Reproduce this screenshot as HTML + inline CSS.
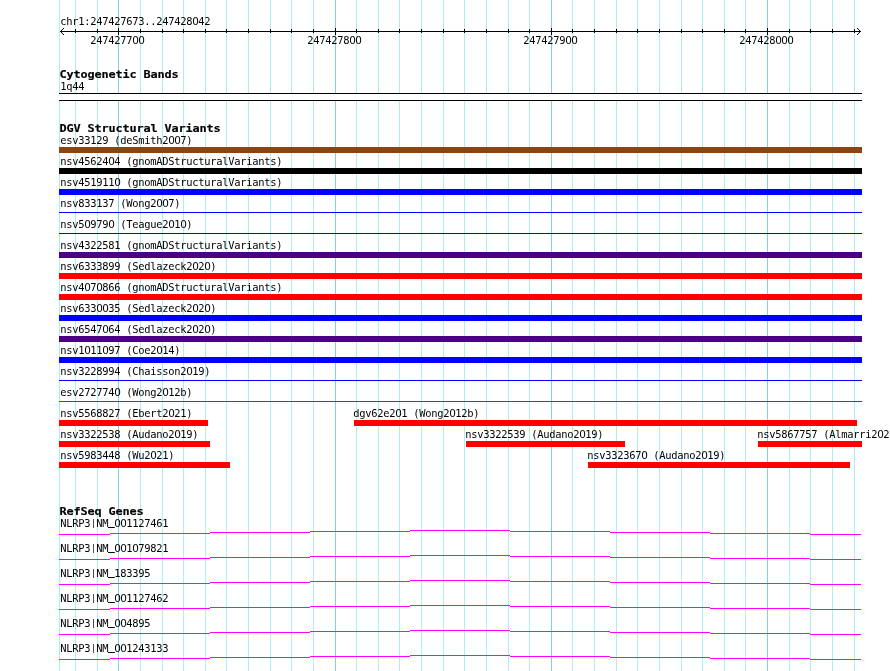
<!DOCTYPE html>
<html lang="en"><head><meta charset="utf-8"><title>chr1:247427673..247428042</title>
<style>
html,body{margin:0;padding:0;background:#fff;}
svg{display:block;will-change:transform;}
.s{font-family:"DejaVu Sans Mono","Liberation Mono",monospace;font-size:11px;fill:#000;}
.b{font-family:"DejaVu Sans Mono","Liberation Mono",monospace;font-weight:bold;font-size:11px;fill:#000;stroke:#000;stroke-width:0.15px;}
.z{font-family:"DejaVu Sans","Liberation Sans",sans-serif;}
.u{stroke:#000;stroke-width:0.55px;}
.p{font-size:9px;}
rect,line{shape-rendering:crispEdges;}
</style></head><body>
<svg width="890" height="671" viewBox="0 0 890 671">
<rect x="0" y="0" width="890" height="671" fill="#ffffff"/>
<g id="grid">
<rect x="59" y="0" width="1" height="671" fill="#AFEEEE"/>
<rect x="75" y="0" width="1" height="671" fill="#AFEEEE"/>
<rect x="97" y="0" width="1" height="671" fill="#AFEEEE"/>
<rect x="118" y="0" width="1" height="671" fill="#87CEEB"/>
<rect x="140" y="0" width="1" height="671" fill="#AFEEEE"/>
<rect x="162" y="0" width="1" height="671" fill="#AFEEEE"/>
<rect x="183" y="0" width="1" height="671" fill="#AFEEEE"/>
<rect x="205" y="0" width="1" height="671" fill="#AFEEEE"/>
<rect x="226" y="0" width="1" height="671" fill="#AFEEEE"/>
<rect x="248" y="0" width="1" height="671" fill="#AFEEEE"/>
<rect x="270" y="0" width="1" height="671" fill="#AFEEEE"/>
<rect x="291" y="0" width="1" height="671" fill="#AFEEEE"/>
<rect x="313" y="0" width="1" height="671" fill="#AFEEEE"/>
<rect x="335" y="0" width="1" height="671" fill="#87CEEB"/>
<rect x="356" y="0" width="1" height="671" fill="#AFEEEE"/>
<rect x="378" y="0" width="1" height="671" fill="#AFEEEE"/>
<rect x="399" y="0" width="1" height="671" fill="#AFEEEE"/>
<rect x="421" y="0" width="1" height="671" fill="#AFEEEE"/>
<rect x="443" y="0" width="1" height="671" fill="#AFEEEE"/>
<rect x="464" y="0" width="1" height="671" fill="#AFEEEE"/>
<rect x="486" y="0" width="1" height="671" fill="#AFEEEE"/>
<rect x="508" y="0" width="1" height="671" fill="#AFEEEE"/>
<rect x="529" y="0" width="1" height="671" fill="#AFEEEE"/>
<rect x="551" y="0" width="1" height="671" fill="#87CEEB"/>
<rect x="572" y="0" width="1" height="671" fill="#AFEEEE"/>
<rect x="594" y="0" width="1" height="671" fill="#AFEEEE"/>
<rect x="616" y="0" width="1" height="671" fill="#AFEEEE"/>
<rect x="637" y="0" width="1" height="671" fill="#AFEEEE"/>
<rect x="659" y="0" width="1" height="671" fill="#AFEEEE"/>
<rect x="681" y="0" width="1" height="671" fill="#AFEEEE"/>
<rect x="702" y="0" width="1" height="671" fill="#AFEEEE"/>
<rect x="724" y="0" width="1" height="671" fill="#AFEEEE"/>
<rect x="745" y="0" width="1" height="671" fill="#AFEEEE"/>
<rect x="767" y="0" width="1" height="671" fill="#87CEEB"/>
<rect x="789" y="0" width="1" height="671" fill="#AFEEEE"/>
<rect x="810" y="0" width="1" height="671" fill="#AFEEEE"/>
<rect x="832" y="0" width="1" height="671" fill="#AFEEEE"/>
<rect x="854" y="0" width="1" height="671" fill="#AFEEEE"/>
</g>
<g id="scale">
<g><title>chr1:247427673..247428042</title><text class="s" transform="translate(60.5 25) scale(0.95 1)" x="-0.15 6.16 12.48 18.79 25.11 31.43 37.74 44.06 50.37 56.69 63 69.32 75.64 81.95 88.27 94.58 100.9 107.22 113.53 119.85 126.16 132.48 138.61 145.11 151.43">chr1:247427673..247428<tspan class="z">0</tspan>42</text></g>
<rect x="60" y="31" width="801" height="1" fill="#000"/>
<rect x="61" y="30" width="1" height="1" fill="#000"/>
<rect x="61" y="32" width="1" height="1" fill="#000"/>
<rect x="859" y="30" width="1" height="1" fill="#000"/>
<rect x="859" y="32" width="1" height="1" fill="#000"/>
<rect x="62" y="29" width="1" height="1" fill="#000"/>
<rect x="62" y="33" width="1" height="1" fill="#000"/>
<rect x="858" y="29" width="1" height="1" fill="#000"/>
<rect x="858" y="33" width="1" height="1" fill="#000"/>
<rect x="63" y="28" width="1" height="1" fill="#000"/>
<rect x="63" y="34" width="1" height="1" fill="#000"/>
<rect x="857" y="28" width="1" height="1" fill="#000"/>
<rect x="857" y="34" width="1" height="1" fill="#000"/>
<rect x="75" y="29" width="1" height="4" fill="#000"/>
<rect x="97" y="29" width="1" height="4" fill="#000"/>
<rect x="118" y="28" width="1" height="7" fill="#000"/>
<g><title>247427700</title><text class="s" transform="translate(90.5 44) scale(0.95 1)" x="-0.15 6.16 12.48 18.79 25.11 31.43 37.74 43.87 50.18">2474277<tspan class="z">0</tspan><tspan class="z">0</tspan></text></g>
<rect x="140" y="29" width="1" height="4" fill="#000"/>
<rect x="162" y="29" width="1" height="4" fill="#000"/>
<rect x="183" y="29" width="1" height="4" fill="#000"/>
<rect x="205" y="29" width="1" height="4" fill="#000"/>
<rect x="226" y="29" width="1" height="4" fill="#000"/>
<rect x="248" y="29" width="1" height="4" fill="#000"/>
<rect x="270" y="29" width="1" height="4" fill="#000"/>
<rect x="291" y="29" width="1" height="4" fill="#000"/>
<rect x="313" y="29" width="1" height="4" fill="#000"/>
<rect x="335" y="28" width="1" height="7" fill="#000"/>
<g><title>247427800</title><text class="s" transform="translate(307.5 44) scale(0.95 1)" x="-0.15 6.16 12.48 18.79 25.11 31.43 37.74 43.87 50.18">2474278<tspan class="z">0</tspan><tspan class="z">0</tspan></text></g>
<rect x="356" y="29" width="1" height="4" fill="#000"/>
<rect x="378" y="29" width="1" height="4" fill="#000"/>
<rect x="399" y="29" width="1" height="4" fill="#000"/>
<rect x="421" y="29" width="1" height="4" fill="#000"/>
<rect x="443" y="29" width="1" height="4" fill="#000"/>
<rect x="464" y="29" width="1" height="4" fill="#000"/>
<rect x="486" y="29" width="1" height="4" fill="#000"/>
<rect x="508" y="29" width="1" height="4" fill="#000"/>
<rect x="529" y="29" width="1" height="4" fill="#000"/>
<rect x="551" y="28" width="1" height="7" fill="#000"/>
<g><title>247427900</title><text class="s" transform="translate(523.5 44) scale(0.95 1)" x="-0.15 6.16 12.48 18.79 25.11 31.43 37.74 43.87 50.18">2474279<tspan class="z">0</tspan><tspan class="z">0</tspan></text></g>
<rect x="572" y="29" width="1" height="4" fill="#000"/>
<rect x="594" y="29" width="1" height="4" fill="#000"/>
<rect x="616" y="29" width="1" height="4" fill="#000"/>
<rect x="637" y="29" width="1" height="4" fill="#000"/>
<rect x="659" y="29" width="1" height="4" fill="#000"/>
<rect x="681" y="29" width="1" height="4" fill="#000"/>
<rect x="702" y="29" width="1" height="4" fill="#000"/>
<rect x="724" y="29" width="1" height="4" fill="#000"/>
<rect x="745" y="29" width="1" height="4" fill="#000"/>
<rect x="767" y="28" width="1" height="7" fill="#000"/>
<g><title>247428000</title><text class="s" transform="translate(739.5 44) scale(0.95 1)" x="-0.15 6.16 12.48 18.79 25.11 31.43 37.55 43.87 50.18">247428<tspan class="z">0</tspan><tspan class="z">0</tspan><tspan class="z">0</tspan></text></g>
<rect x="789" y="29" width="1" height="4" fill="#000"/>
<rect x="810" y="29" width="1" height="4" fill="#000"/>
<rect x="832" y="29" width="1" height="4" fill="#000"/>
<rect x="854" y="29" width="1" height="4" fill="#000"/>
</g>
<g id="cyto">
<text class="b" transform="translate(59.5 78) scale(1.08 1)" x="-0.07 6.41 12.89 19.37 25.86 32.34 38.82 45.3 51.78 58.26 64.74 71.23 77.71 84.19 90.67 97.15 103.63">Cytogenetic Bands</text>
<text class="s" transform="translate(60.5 90) scale(0.95 1)" x="-0.15 6.16 12.48 18.79">1q44</text>
<rect x="59" y="93" width="803" height="8" fill="#fff"/>
<rect x="59" y="93" width="803" height="1" fill="#000"/>
<rect x="59" y="100" width="803" height="1" fill="#000"/>
</g>
<g id="dgv">
<text class="b" transform="translate(59.5 132) scale(1.08 1)" x="-0.07 6.41 12.89 19.37 25.86 32.34 38.82 45.3 51.78 58.26 64.74 71.23 77.71 84.19 90.67 97.15 103.63 110.11 116.6 123.08 129.56 136.04 142.52">DGV Structural Variants</text>
<g><title>esv33129 (deSmith2007)</title><text class="s" transform="translate(60.5 144) scale(0.95 1)" x="-0.15 6.16 12.48 18.79 25.11 31.43 37.74 44.06 50.37 56.69 63 69.32 75.64 81.95 88.27 94.58 100.9 107.22 113.34 119.66 126.16 132.48">esv33129 (deSmith2<tspan class="z">0</tspan><tspan class="z">0</tspan>7)</text></g>
<rect x="59" y="147" width="803" height="6" fill="#8B4513"/>
<g><title>nsv4562404 (gnomADStructuralVariants)</title><text class="s" transform="translate(60.5 165) scale(0.95 1)" x="-0.15 6.16 12.48 18.79 25.11 31.43 37.74 44.06 50.18 56.69 63 69.32 75.64 81.95 88.27 94.58 100.9 107.22 113.53 119.85 126.16 132.48 138.79 145.11 151.43 157.74 164.06 170.37 176.69 183 189.32 195.64 201.95 208.27 214.58 220.9 227.22">nsv45624<tspan class="z">0</tspan>4 (gnomADStructuralVariants)</text></g>
<rect x="59" y="168" width="803" height="6" fill="#000000"/>
<g><title>nsv4519110 (gnomADStructuralVariants)</title><text class="s" transform="translate(60.5 186) scale(0.95 1)" x="-0.15 6.16 12.48 18.79 25.11 31.43 37.74 44.06 50.37 56.5 63 69.32 75.64 81.95 88.27 94.58 100.9 107.22 113.53 119.85 126.16 132.48 138.79 145.11 151.43 157.74 164.06 170.37 176.69 183 189.32 195.64 201.95 208.27 214.58 220.9 227.22">nsv451911<tspan class="z">0</tspan> (gnomADStructuralVariants)</text></g>
<rect x="59" y="189" width="803" height="6" fill="#0000FF"/>
<g><title>nsv833137 (Wong2007)</title><text class="s" transform="translate(60.5 207) scale(0.95 1)" x="-0.15 6.16 12.48 18.79 25.11 31.43 37.74 44.06 50.37 56.69 63 69.32 75.64 81.95 88.27 94.58 100.71 107.03 113.53 119.85">nsv833137 (Wong2<tspan class="z">0</tspan><tspan class="z">0</tspan>7)</text></g>
<rect x="59" y="212" width="803" height="1" fill="#0000FF"/>
<g><title>nsv509790 (Teague2010)</title><text class="s" transform="translate(60.5 228) scale(0.95 1)" x="-0.15 6.16 12.48 18.79 24.92 31.43 37.74 44.06 50.18 56.69 63 69.32 75.64 81.95 88.27 94.58 100.9 107.22 113.34 119.85 125.97 132.48">nsv5<tspan class="z">0</tspan>979<tspan class="z">0</tspan> (Teague2<tspan class="z">0</tspan>1<tspan class="z">0</tspan>)</text></g>
<rect x="59" y="233" width="803" height="1" fill="#0000FF"/>
<text class="s" transform="translate(60.5 249) scale(0.95 1)" x="-0.15 6.16 12.48 18.79 25.11 31.43 37.74 44.06 50.37 56.69 63 69.32 75.64 81.95 88.27 94.58 100.9 107.22 113.53 119.85 126.16 132.48 138.79 145.11 151.43 157.74 164.06 170.37 176.69 183 189.32 195.64 201.95 208.27 214.58 220.9 227.22">nsv4322581 (gnomADStructuralVariants)</text>
<rect x="59" y="252" width="803" height="6" fill="#4B0082"/>
<g><title>nsv6333899 (Sedlazeck2020)</title><text class="s" transform="translate(60.5 270) scale(0.95 1)" x="-0.15 6.16 12.48 18.79 25.11 31.43 37.74 44.06 50.37 56.69 63 69.32 75.64 81.95 88.27 94.58 100.9 107.22 113.53 119.85 126.16 132.48 138.61 145.11 151.24 157.74">nsv6333899 (Sedlazeck2<tspan class="z">0</tspan>2<tspan class="z">0</tspan>)</text></g>
<rect x="59" y="273" width="803" height="6" fill="#FF0000"/>
<g><title>nsv4070866 (gnomADStructuralVariants)</title><text class="s" transform="translate(60.5 291) scale(0.95 1)" x="-0.15 6.16 12.48 18.79 24.92 31.43 37.55 44.06 50.37 56.69 63 69.32 75.64 81.95 88.27 94.58 100.9 107.22 113.53 119.85 126.16 132.48 138.79 145.11 151.43 157.74 164.06 170.37 176.69 183 189.32 195.64 201.95 208.27 214.58 220.9 227.22">nsv4<tspan class="z">0</tspan>7<tspan class="z">0</tspan>866 (gnomADStructuralVariants)</text></g>
<rect x="59" y="294" width="803" height="6" fill="#FF0000"/>
<g><title>nsv6330035 (Sedlazeck2020)</title><text class="s" transform="translate(60.5 312) scale(0.95 1)" x="-0.15 6.16 12.48 18.79 25.11 31.43 37.55 43.87 50.37 56.69 63 69.32 75.64 81.95 88.27 94.58 100.9 107.22 113.53 119.85 126.16 132.48 138.61 145.11 151.24 157.74">nsv633<tspan class="z">0</tspan><tspan class="z">0</tspan>35 (Sedlazeck2<tspan class="z">0</tspan>2<tspan class="z">0</tspan>)</text></g>
<rect x="59" y="315" width="803" height="6" fill="#0000FF"/>
<g><title>nsv6547064 (Sedlazeck2020)</title><text class="s" transform="translate(60.5 333) scale(0.95 1)" x="-0.15 6.16 12.48 18.79 25.11 31.43 37.74 43.87 50.37 56.69 63 69.32 75.64 81.95 88.27 94.58 100.9 107.22 113.53 119.85 126.16 132.48 138.61 145.11 151.24 157.74">nsv6547<tspan class="z">0</tspan>64 (Sedlazeck2<tspan class="z">0</tspan>2<tspan class="z">0</tspan>)</text></g>
<rect x="59" y="336" width="803" height="6" fill="#4B0082"/>
<g><title>nsv1011097 (Coe2014)</title><text class="s" transform="translate(60.5 354) scale(0.95 1)" x="-0.15 6.16 12.48 18.79 24.92 31.43 37.74 43.87 50.37 56.69 63 69.32 75.64 81.95 88.27 94.58 100.71 107.22 113.53 119.85">nsv1<tspan class="z">0</tspan>11<tspan class="z">0</tspan>97 (Coe2<tspan class="z">0</tspan>14)</text></g>
<rect x="59" y="357" width="803" height="6" fill="#0000FF"/>
<g><title>nsv3228994 (Chaisson2019)</title><text class="s" transform="translate(60.5 375) scale(0.95 1)" x="-0.15 6.16 12.48 18.79 25.11 31.43 37.74 44.06 50.37 56.69 63 69.32 75.64 81.95 88.27 94.58 100.9 107.22 113.53 119.85 126.16 132.29 138.79 145.11 151.43">nsv3228994 (Chaisson2<tspan class="z">0</tspan>19)</text></g>
<rect x="59" y="380" width="803" height="1" fill="#0000FF"/>
<g><title>esv2727740 (Wong2012b)</title><text class="s" transform="translate(60.5 396) scale(0.95 1)" x="-0.15 6.16 12.48 18.79 25.11 31.43 37.74 44.06 50.37 56.5 63 69.32 75.64 81.95 88.27 94.58 100.9 107.03 113.53 119.85 126.16 132.48">esv272774<tspan class="z">0</tspan> (Wong2<tspan class="z">0</tspan>12b)</text></g>
<rect x="59" y="401" width="803" height="1" fill="#FF0000"/>
<g><title>nsv5568827 (Ebert2021)</title><text class="s" transform="translate(60.5 417) scale(0.95 1)" x="-0.15 6.16 12.48 18.79 25.11 31.43 37.74 44.06 50.37 56.69 63 69.32 75.64 81.95 88.27 94.58 100.9 107.22 113.34 119.85 126.16 132.48">nsv5568827 (Ebert2<tspan class="z">0</tspan>21)</text></g>
<rect x="59" y="420" width="149" height="6" fill="#FF0000"/>
<g><title>dgv62e201 (Wong2012b)</title><text class="s" transform="translate(353.5 417) scale(0.95 1)" x="-0.15 6.16 12.48 18.79 25.11 31.43 37.74 43.87 50.37 56.69 63 69.32 75.64 81.95 88.27 94.58 100.71 107.22 113.53 119.85 126.16">dgv62e2<tspan class="z">0</tspan>1 (Wong2<tspan class="z">0</tspan>12b)</text></g>
<rect x="354" y="420" width="503" height="6" fill="#FF0000"/>
<g><title>nsv3322538 (Audano2019)</title><text class="s" transform="translate(60.5 438) scale(0.95 1)" x="-0.15 6.16 12.48 18.79 25.11 31.43 37.74 44.06 50.37 56.69 63 69.32 75.64 81.95 88.27 94.58 100.9 107.22 113.53 119.66 126.16 132.48 138.79">nsv3322538 (Audano2<tspan class="z">0</tspan>19)</text></g>
<rect x="59" y="441" width="151" height="6" fill="#FF0000"/>
<g><title>nsv3322539 (Audano2019)</title><text class="s" transform="translate(465.5 438) scale(0.95 1)" x="-0.15 6.16 12.48 18.79 25.11 31.43 37.74 44.06 50.37 56.69 63 69.32 75.64 81.95 88.27 94.58 100.9 107.22 113.53 119.66 126.16 132.48 138.79">nsv3322539 (Audano2<tspan class="z">0</tspan>19)</text></g>
<rect x="466" y="441" width="159" height="6" fill="#FF0000"/>
<g><title>nsv5867757 (Almarri2021)</title><text class="s" transform="translate(757.5 438) scale(0.95 1)" x="-0.15 6.16 12.48 18.79 25.11 31.43 37.74 44.06 50.37 56.69 63 69.32 75.64 81.95 88.27 94.58 100.9 107.22 113.53 119.85 125.97 132.48 138.79 145.11">nsv5867757 (Almarri2<tspan class="z">0</tspan>21)</text></g>
<rect x="758" y="441" width="104" height="6" fill="#FF0000"/>
<g><title>nsv5983448 (Wu2021)</title><text class="s" transform="translate(60.5 459) scale(0.95 1)" x="-0.15 6.16 12.48 18.79 25.11 31.43 37.74 44.06 50.37 56.69 63 69.32 75.64 81.95 88.27 94.4 100.9 107.22 113.53">nsv5983448 (Wu2<tspan class="z">0</tspan>21)</text></g>
<rect x="59" y="462" width="171" height="6" fill="#FF0000"/>
<g><title>nsv3323670 (Audano2019)</title><text class="s" transform="translate(587.5 459) scale(0.95 1)" x="-0.15 6.16 12.48 18.79 25.11 31.43 37.74 44.06 50.37 56.5 63 69.32 75.64 81.95 88.27 94.58 100.9 107.22 113.53 119.66 126.16 132.48 138.79">nsv332367<tspan class="z">0</tspan> (Audano2<tspan class="z">0</tspan>19)</text></g>
<rect x="588" y="462" width="262" height="6" fill="#FF0000"/>
</g>
<g id="refseq">
<text class="b" transform="translate(59.5 515) scale(1.08 1)" x="-0.07 6.41 12.89 19.37 25.86 32.34 38.82 45.3 51.78 58.26 64.74 71.23">RefSeq Genes</text>
<g><title>NLRP3|NM_001127461</title><text class="s" transform="translate(60.5 527) scale(0.95 1)" x="-0.15 6.16 12.48 18.79 25.11 32.03 37.74 44.06 50.37 56.5 62.82 69.32 75.64 81.95 88.27 94.58 100.9 107.22" y="0 0 0 0 0 -1.1 0 0 -1.9 0 0 0 0 0 0 0 0 0">NLRP3<tspan class="p">|</tspan>NM<tspan class="u">_</tspan><tspan class="z">0</tspan><tspan class="z">0</tspan>1127461</text></g>
<rect x="59" y="534" width="51" height="1" fill="#FF00FF"/>
<rect x="110" y="533" width="100" height="1" fill="#FF00FF"/>
<rect x="210" y="532" width="100" height="1" fill="#FF00FF"/>
<rect x="310" y="531" width="100" height="1" fill="#FF00FF"/>
<rect x="410" y="530" width="100" height="1" fill="#FF00FF"/>
<rect x="510" y="531" width="100" height="1" fill="#FF00FF"/>
<rect x="610" y="532" width="100" height="1" fill="#FF00FF"/>
<rect x="710" y="533" width="100" height="1" fill="#FF00FF"/>
<rect x="810" y="534" width="51" height="1" fill="#FF00FF"/>
<g><title>NLRP3|NM_001079821</title><text class="s" transform="translate(60.5 552) scale(0.95 1)" x="-0.15 6.16 12.48 18.79 25.11 32.03 37.74 44.06 50.37 56.5 62.82 69.32 75.45 81.95 88.27 94.58 100.9 107.22" y="0 0 0 0 0 -1.1 0 0 -1.9 0 0 0 0 0 0 0 0 0">NLRP3<tspan class="p">|</tspan>NM<tspan class="u">_</tspan><tspan class="z">0</tspan><tspan class="z">0</tspan>1<tspan class="z">0</tspan>79821</text></g>
<rect x="59" y="559" width="51" height="1" fill="#FF00FF"/>
<rect x="110" y="558" width="100" height="1" fill="#FF00FF"/>
<rect x="210" y="557" width="100" height="1" fill="#FF00FF"/>
<rect x="310" y="556" width="100" height="1" fill="#FF00FF"/>
<rect x="410" y="555" width="100" height="1" fill="#FF00FF"/>
<rect x="510" y="556" width="100" height="1" fill="#FF00FF"/>
<rect x="610" y="557" width="100" height="1" fill="#FF00FF"/>
<rect x="710" y="558" width="100" height="1" fill="#FF00FF"/>
<rect x="810" y="559" width="51" height="1" fill="#FF00FF"/>
<g><title>NLRP3|NM_183395</title><text class="s" transform="translate(60.5 577) scale(0.95 1)" x="-0.15 6.16 12.48 18.79 25.11 32.03 37.74 44.06 50.37 56.69 63 69.32 75.64 81.95 88.27" y="0 0 0 0 0 -1.1 0 0 -1.9 0 0 0 0 0 0">NLRP3<tspan class="p">|</tspan>NM<tspan class="u">_</tspan>183395</text></g>
<rect x="59" y="584" width="51" height="1" fill="#FF00FF"/>
<rect x="110" y="583" width="100" height="1" fill="#FF00FF"/>
<rect x="210" y="582" width="100" height="1" fill="#FF00FF"/>
<rect x="310" y="581" width="100" height="1" fill="#FF00FF"/>
<rect x="410" y="580" width="100" height="1" fill="#FF00FF"/>
<rect x="510" y="581" width="100" height="1" fill="#FF00FF"/>
<rect x="610" y="582" width="100" height="1" fill="#FF00FF"/>
<rect x="710" y="583" width="100" height="1" fill="#FF00FF"/>
<rect x="810" y="584" width="51" height="1" fill="#FF00FF"/>
<g><title>NLRP3|NM_001127462</title><text class="s" transform="translate(60.5 602) scale(0.95 1)" x="-0.15 6.16 12.48 18.79 25.11 32.03 37.74 44.06 50.37 56.5 62.82 69.32 75.64 81.95 88.27 94.58 100.9 107.22" y="0 0 0 0 0 -1.1 0 0 -1.9 0 0 0 0 0 0 0 0 0">NLRP3<tspan class="p">|</tspan>NM<tspan class="u">_</tspan><tspan class="z">0</tspan><tspan class="z">0</tspan>1127462</text></g>
<rect x="59" y="609" width="51" height="1" fill="#FF00FF"/>
<rect x="110" y="608" width="100" height="1" fill="#FF00FF"/>
<rect x="210" y="607" width="100" height="1" fill="#FF00FF"/>
<rect x="310" y="606" width="100" height="1" fill="#FF00FF"/>
<rect x="410" y="605" width="100" height="1" fill="#FF00FF"/>
<rect x="510" y="606" width="100" height="1" fill="#FF00FF"/>
<rect x="610" y="607" width="100" height="1" fill="#FF00FF"/>
<rect x="710" y="608" width="100" height="1" fill="#FF00FF"/>
<rect x="810" y="609" width="51" height="1" fill="#FF00FF"/>
<g><title>NLRP3|NM_004895</title><text class="s" transform="translate(60.5 627) scale(0.95 1)" x="-0.15 6.16 12.48 18.79 25.11 32.03 37.74 44.06 50.37 56.5 62.82 69.32 75.64 81.95 88.27" y="0 0 0 0 0 -1.1 0 0 -1.9 0 0 0 0 0 0">NLRP3<tspan class="p">|</tspan>NM<tspan class="u">_</tspan><tspan class="z">0</tspan><tspan class="z">0</tspan>4895</text></g>
<rect x="59" y="634" width="51" height="1" fill="#FF00FF"/>
<rect x="110" y="633" width="100" height="1" fill="#FF00FF"/>
<rect x="210" y="632" width="100" height="1" fill="#FF00FF"/>
<rect x="310" y="631" width="100" height="1" fill="#FF00FF"/>
<rect x="410" y="630" width="100" height="1" fill="#FF00FF"/>
<rect x="510" y="631" width="100" height="1" fill="#FF00FF"/>
<rect x="610" y="632" width="100" height="1" fill="#FF00FF"/>
<rect x="710" y="633" width="100" height="1" fill="#FF00FF"/>
<rect x="810" y="634" width="51" height="1" fill="#FF00FF"/>
<g><title>NLRP3|NM_001243133</title><text class="s" transform="translate(60.5 652) scale(0.95 1)" x="-0.15 6.16 12.48 18.79 25.11 32.03 37.74 44.06 50.37 56.5 62.82 69.32 75.64 81.95 88.27 94.58 100.9 107.22" y="0 0 0 0 0 -1.1 0 0 -1.9 0 0 0 0 0 0 0 0 0">NLRP3<tspan class="p">|</tspan>NM<tspan class="u">_</tspan><tspan class="z">0</tspan><tspan class="z">0</tspan>1243133</text></g>
<rect x="59" y="659" width="51" height="1" fill="#FF00FF"/>
<rect x="110" y="658" width="100" height="1" fill="#FF00FF"/>
<rect x="210" y="657" width="100" height="1" fill="#FF00FF"/>
<rect x="310" y="656" width="100" height="1" fill="#FF00FF"/>
<rect x="410" y="655" width="100" height="1" fill="#FF00FF"/>
<rect x="510" y="656" width="100" height="1" fill="#FF00FF"/>
<rect x="610" y="657" width="100" height="1" fill="#FF00FF"/>
<rect x="710" y="658" width="100" height="1" fill="#FF00FF"/>
<rect x="810" y="659" width="51" height="1" fill="#FF00FF"/>
</g>
</svg>
</body></html>
